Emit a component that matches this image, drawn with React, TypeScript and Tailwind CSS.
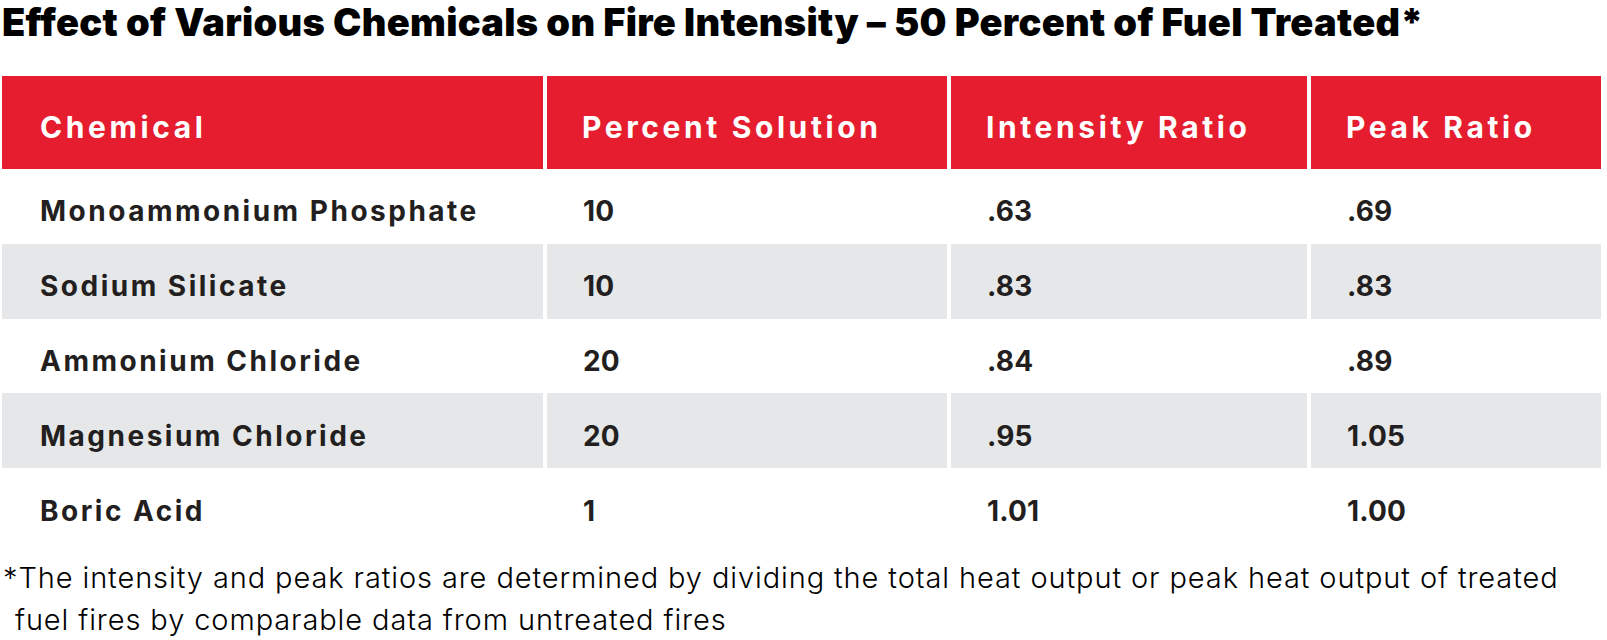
const rows = [
  ["Monoammonium Phosphate", "10", ".63", ".69"],
  ["Sodium Silicate", "10", ".83", ".83"],
  ["Ammonium Chloride", "20", ".84", ".89"],
  ["Magnesium Chloride", "20", ".95", "1.05"],
  ["Boric Acid", "1", "1.01", "1.00"],
];

const headers = ["Chemical", "Percent Solution", "Intensity Ratio", "Peak Ratio"];

export default function App() {
  return (
    <div className="w-[1607px] h-[640px] overflow-hidden bg-white font-['Inter',sans-serif] text-[#231f20]">
      <h1 className="pl-[2px] text-[38px] leading-[44px] font-black tracking-[0.3px] text-black">
        Effect of Various Chemicals on Fire Intensity – 50 Percent of Fuel Treated*
      </h1>

      <div className="mt-[32px] ml-[2px] grid grid-cols-[541px_400px_356px_290px] gap-x-[4px]">
        {headers.map((h, i) => (
          <div
            key={h}
            className={`flex h-[93px] items-center bg-[#e51d2e] pt-[10px] text-[30px] font-bold tracking-[3.6px] text-white ${
              i === 0 ? "pl-[38px]" : "pl-[35px]"
            }`}
          >
            {h}
          </div>
        ))}
        {rows.map((r, ri) =>
          r.map((cell, ci) => (
            <div
              key={`${ri}-${ci}`}
              className={`flex h-[74.8px] items-center pt-[10px] text-[28px] font-bold ${
                ri % 2 === 1 ? "bg-[#e6e7e8]" : "bg-white"
              } ${ci === 0 ? "pl-[38px] tracking-[2.5px]" : "pl-[36px] tracking-[0.2px]"}`}
            >
              {cell}
            </div>
          ))
        )}
      </div>

      <div className="mt-[14px] pl-[3px] text-[29px] leading-[42px] font-light tracking-[0.9px] text-black">
        <div>
          *The intensity and peak ratios are determined by dividing the total heat output or peak heat output of treated
        </div>
        <div className="pl-[12px]">fuel fires by comparable data from untreated fires</div>
      </div>
    </div>
  );
}
